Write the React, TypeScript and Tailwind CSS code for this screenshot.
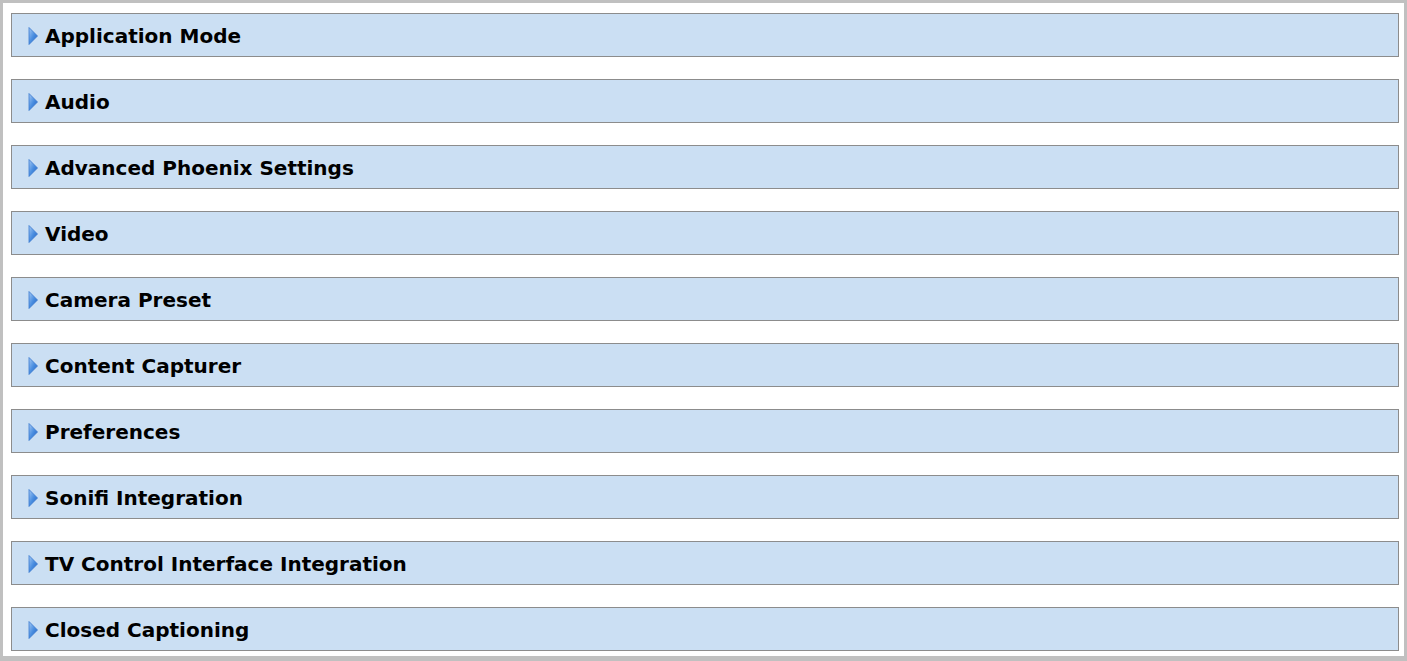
const sections = [
  'Application Mode',
  'Audio',
  'Advanced Phoenix Settings',
  'Video',
  'Camera Preset',
  'Content Capturer',
  'Preferences',
  'Sonifi Integration',
  'TV Control Interface Integration',
  'Closed Captioning',
];

function Arrow() {
  return (
    <svg width="10" height="18" viewBox="0 0 10 18" className="shrink-0">
      <defs>
        <linearGradient id="arrowFill" x1="0" y1="0" x2="1" y2="1">
          <stop offset="0" stopColor="#a6caf4" />
          <stop offset="0.5" stopColor="#4a8ee0" />
          <stop offset="1" stopColor="#1f5fbf" />
        </linearGradient>
      </defs>
      <path d="M1 0.5 L9.5 9 L1 17.5 Z" fill="url(#arrowFill)" stroke="#3a78cf" strokeWidth="0.8" strokeLinejoin="round" />
    </svg>
  );
}

export default function App() {
  return (
    <div className="h-[661px] w-[1407px] overflow-hidden border-[3px] border-b-[5px] border-[#c0c0c0] bg-white pl-[8px] pr-[5px] pt-[10px]">
      <div className="flex flex-col gap-[22px]">
        {sections.map((title) => (
          <div
            key={title}
            className="flex h-[44px] items-center gap-[7px] border border-[#8c8c8c] bg-[#cbdff3] pl-[16px] pt-[1px]"
          >
            <Arrow />
            <span className="text-[20px] font-bold text-black [font-family:'DejaVu_Sans',Verdana,sans-serif]">
              {title}
            </span>
          </div>
        ))}
      </div>
    </div>
  );
}
